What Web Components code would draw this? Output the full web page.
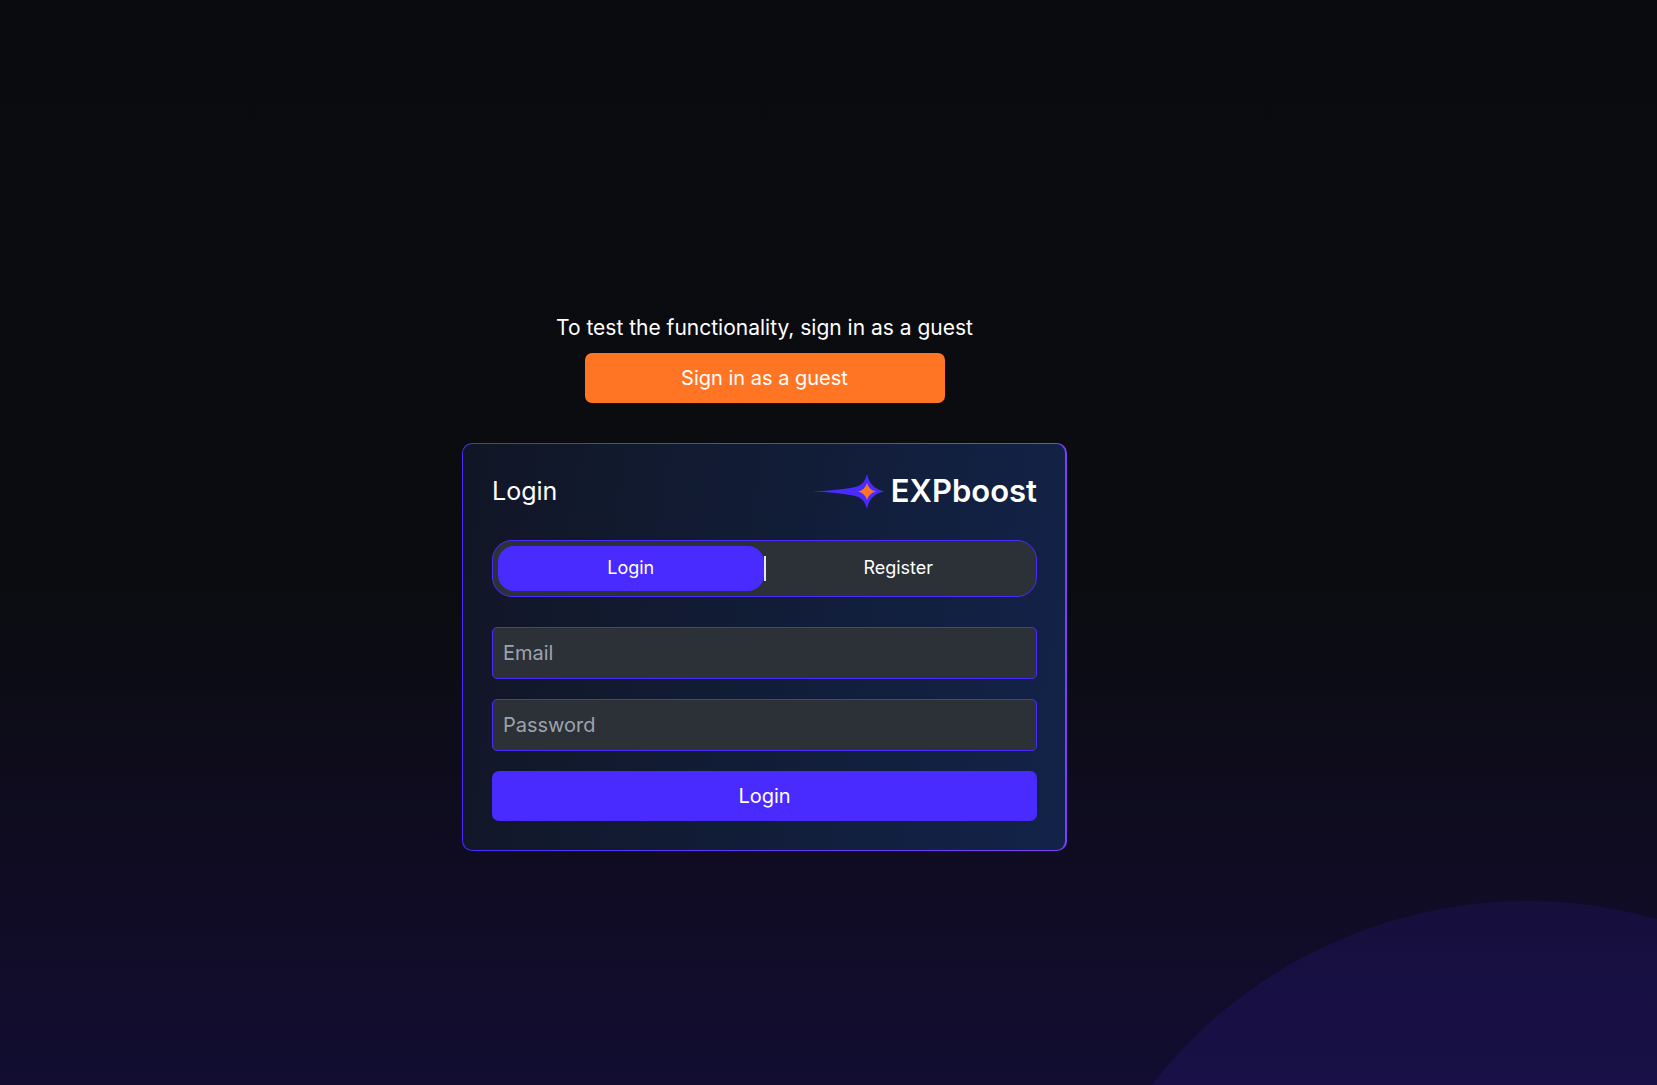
<!DOCTYPE html>
<html lang="en">
<head>
<meta charset="utf-8">
<title>EXPboost – Login</title>
<style>
  html, body { margin: 0; height: 100%; }
  body {
    background: #0a0b0f;
    color: #fff;
    font-family: Inter, "Liberation Sans", sans-serif;
    font-size: 20px;
    line-height: 30px;
  }
</style>
</head>
<body>
<login-page>
  <guest-sign-in></guest-sign-in>
  <auth-card heading="Login">
    <exp-logo slot="logo"></exp-logo>
    <auth-tabs></auth-tabs>
    <login-form></login-form>
  </auth-card>
</login-page>
<script>
  const define = (name, html) => customElements.define(name, class extends HTMLElement {
    constructor() {
      super();
      this.attachShadow({ mode: "open" }).innerHTML = html;
    }
    connectedCallback() {
      const heading = this.shadowRoot.querySelector("[data-heading]");
      if (heading) heading.textContent = this.getAttribute("heading");
    }
  });

  define("login-page", `
    <style>
      :host {
        position: relative; overflow: hidden; box-sizing: border-box;
        display: flex; flex-direction: column; align-items: center; justify-content: center;
        gap: 40px; min-height: 100%; padding: 78px 128px 0 0;
        background: linear-gradient(#0a0b0f 0%, #0b0c10 54%, #0f0c20 76%, #120d31 100%);
      }
      .orb {
        position: absolute; right: -345px; bottom: -766px;
        width: 950px; height: 950px; border-radius: 50%;
        background: #4a2bff; opacity: .11;
      }
      slot { position: relative; }
    </style>
    <div class="orb"></div>
    <slot></slot>
  `);

  define("guest-sign-in", `
    <style>
      :host { display: flex; flex-direction: column; align-items: center; gap: 10px; }
      p { margin: 0; font-size: 21px; }
      button {
        width: 360px; height: 50px; border: 0; border-radius: 7px;
        background: #ff7524; color: #fff; font: inherit; cursor: pointer;
      }
    </style>
    <p>To test the functionality, sign in as a guest</p>
    <button type="button">Sign in as a guest</button>
  `);

  define("auth-card", `
    <style>
      :host {
        display: flex; flex-direction: column; gap: 30px; box-sizing: border-box;
        width: 605px; max-width: 100%; padding: 29px 28px 29px 29px;
        border: 1px solid transparent; border-right-width: 2px; border-radius: 10px;
        background:
          linear-gradient(100deg, #111625, #122349) padding-box,
          linear-gradient(90deg, #4a2bff, #7a40f8) border-box;
      }
      header { display: flex; align-items: center; justify-content: space-between; height: 37px; }
      h1 { margin: 0; font-size: 25px; font-weight: 400; }
    </style>
    <header><h1 data-heading></h1><slot name="logo"></slot></header>
    <slot></slot>
  `);

  define("exp-logo", `
    <style>
      :host { display: flex; align-items: center; gap: 7px; }
      svg { display: block; }
      span { font-size: 31px; line-height: 36px; font-weight: 600; }
    </style>
    <svg width="72" height="36" viewBox="0 0 72 36" aria-hidden="true">
      <path fill="#4a2bff" d="M0 18.500C15 18 29 16.500 41 14.500C49 13 53 9 55 1C57 9 61 16 72 18.500C61 21 57 27 55 36C53 28 49 24 41 22.500C29 20 15 19 0 18.500Z"/>
      <path fill="#ff7524" d="M55 10Q57 17 64 18.500Q57 20 55 27Q53 20 46 18.500Q53 17 55 10Z"/>
    </svg>
    <span>EXPboost</span>
  `);

  define("auth-tabs", `
    <style>
      :host {
        display: flex; align-items: center; padding: 5px;
        border: 1px solid #4a2bff; border-radius: 20px; background: #2c3037;
      }
      button {
        flex: 1; height: 45px; border: 0; border-radius: 16px; padding: 0;
        background: none; color: #fff; font: inherit; font-size: 18px; cursor: pointer;
      }
      button[aria-pressed="true"] { background: #4a2bff; }
      i { width: 2px; height: 25px; background: #e6e6ee; }
    </style>
    <button type="button" aria-pressed="true">Login</button>
    <i></i>
    <button type="button" aria-pressed="false">Register</button>
  `);

  define("login-form", `
    <style>
      form { display: flex; flex-direction: column; gap: 20px; }
      :host { display: block; }
      input {
        box-sizing: border-box; width: 100%; height: 52px; padding: 0 10px;
        border: 1px solid #4a2bff; border-radius: 5px;
        background: #2c3037; color: #fff; font: inherit; display: block;
      }
      input::placeholder { color: #9ca3af; opacity: 1; }
      button {
        height: 50px; border: 0; border-radius: 7px;
        background: #4a2bff; color: #fff; font: inherit; cursor: pointer;
      }
    </style>
    <form>
      <label><input type="email" placeholder="Email" aria-label="Email"></label>
      <label><input type="password" placeholder="Password" aria-label="Password"></label>
      <button type="submit">Login</button>
    </form>
  `);
</script>
</body>
</html>
